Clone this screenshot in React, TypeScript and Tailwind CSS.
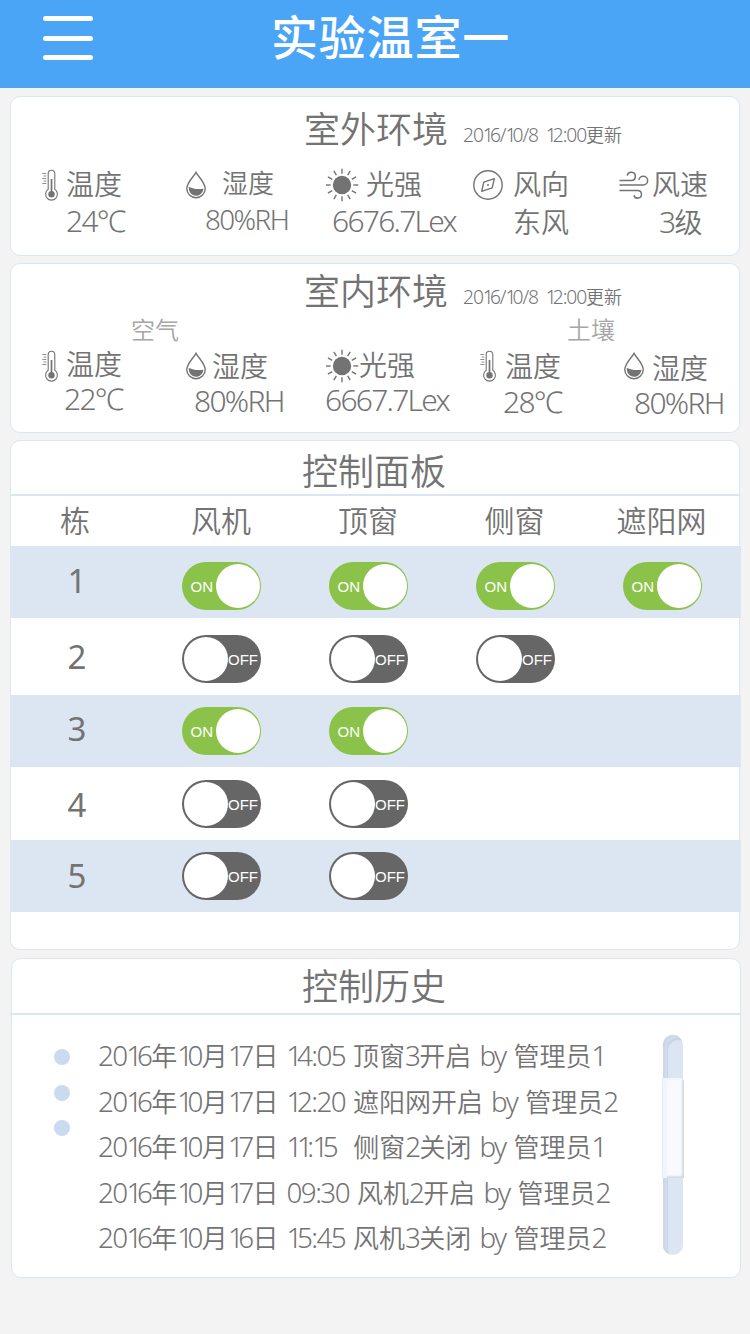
import { Fragment, type ReactNode } from 'react';

const INK = '#737373';

/* Latin runs sit slightly larger and tighter than the CJK glyphs around them. */
function Mixed({ text }: { text: string }) {
  const runs = text.match(/1+|[\x21-\x30\x32-\x7e℃]+|[^\x21-\x7e℃]+/g) ?? [];
  return (
    <>
      {runs.map((run, i) => {
        if (/^1/.test(run)) {
          return (
            <span key={i} className="text-[1.07em] leading-[0] tracking-[-0.2em]">
              {run}
            </span>
          );
        }
        if (/^[\x21-\x7e℃]/.test(run)) {
          return (
            <span key={i} className="text-[1.07em] leading-[0] tracking-[-0.057em]">
              {run}
            </span>
          );
        }
        return <Fragment key={i}>{run}</Fragment>;
      })}
    </>
  );
}

function Thermometer() {
  return (
    <svg width="18" height="34" viewBox="0 0 18 34" fill="none" stroke={INK}>
      <path d="M6.200 21.300V5.600a3.300 3.300 0 0 1 6.600 0v15.700a5.900 5.900 0 1 1-6.600 0Z" strokeWidth="1.100" />
      <path d="M9.500 11v14" strokeWidth="1.700" />
      <circle cx="9.500" cy="26.300" r="3.200" fill={INK} stroke="none" />
      <path d="M.3 5.500h4M1.500 8h2.800M.3 10.500h4M1.500 13h2.800M.3 15.500h4" strokeWidth=".8" />
    </svg>
  );
}

function Drop() {
  return (
    <svg width="20" height="34" viewBox="0 0 20 34" fill="none">
      <path
        d="M10 4.300C7.500 9 .8 14.500.8 20.600a9.200 9.200 0 0 0 18.400 0C19.200 14.500 12.500 9 10 4.300Z"
        stroke={INK}
        strokeWidth="1.400"
      />
      <path d="M2.700 19c2.800.4 4 1.600 7 2 2.700.4 5-.3 7.700-.3-.4 4.300-3.500 7-7.400 7-4.300 0-7.400-3.800-7.300-8.700Z" fill={INK} />
    </svg>
  );
}

function Sun() {
  const rays = Array.from({ length: 12 }, (_, i) => i * 30);
  return (
    <svg width="34" height="34" viewBox="0 0 34 34">
      <circle cx="16" cy="17" r="9.200" fill={INK} />
      {rays.map((a) => (
        <path key={a} d="M16 5.700V.7" stroke={INK} strokeWidth="1.400" transform={`rotate(${a} 16 17)`} />
      ))}
    </svg>
  );
}

function Compass() {
  return (
    <svg width="30" height="34" viewBox="0 0 30 34" fill="none" stroke={INK} strokeWidth="1.400">
      <circle cx="15" cy="17" r="14.200" />
      <path d="M21.300 10.700 19.200 19.800 8.700 23.300 10.800 14.200Z" strokeLinejoin="round" />
      <circle cx="15" cy="17" r="1" fill={INK} stroke="none" />
    </svg>
  );
}

function Wind() {
  return (
    <svg width="30" height="34" viewBox="0 0 30 34" fill="none" stroke={INK} strokeWidth="1.500">
      <path d="M.5 12.500H12.300a4.100 4.100 0 1 0-4.100-4.900" />
      <path d="M.5 17H24.300a4.400 4.400 0 1 0-4.400-5.100" />
      <path d="M.5 22.500H18.700a3.800 3.800 0 1 1-3.700 4.700" />
    </svg>
  );
}

type Metric = {
  icon: ReactNode;
  label: string;
  value: string;
  box: string;
  labelClass: string;
  valueClass: string;
};

const outdoor: Metric[] = [
  { icon: <Thermometer />, label: '温度', value: '24℃', box: 'w-[144px]', labelClass: 'ml-[6px] mt-[-1px]', valueClass: 'ml-[24px] mt-[2px]' },
  { icon: <Drop />, label: '湿度', value: '80%RH', box: 'w-[140px]', labelClass: 'ml-[16px] mt-[-2px] text-[26px]', valueClass: 'ml-[19px] mt-[1px] text-[26px]' },
  { icon: <Sun />, label: '光强', value: '6676.7Lex', box: 'w-[147px]', labelClass: 'ml-[6px] mt-[-1px]', valueClass: 'ml-[6px] mt-[2px]' },
  { icon: <Compass />, label: '风向', value: '东风', box: 'w-[146px]', labelClass: 'ml-[10px] mt-[-1px]', valueClass: 'ml-[40px] mt-[3px]' },
  { icon: <Wind />, label: '风速', value: '3级', box: 'w-[110px]', labelClass: 'ml-[3px] mt-[-1px]', valueClass: 'ml-[40px] mt-[3px]' },
];

const indoor: Metric[] = [
  { icon: <Thermometer />, label: '温度', value: '22℃', box: 'w-[144px]', labelClass: 'ml-[6px] mt-[-2px]', valueClass: 'ml-[22px] mt-[-1px]' },
  { icon: <Drop />, label: '湿度', value: '80%RH', box: 'w-[140px]', labelClass: 'ml-[6px]', valueClass: 'ml-[8px] mt-[1px]' },
  { icon: <Sun />, label: '光强', value: '6667.7Lex', box: 'w-[154px]', labelClass: 'ml-[-1px] mt-[-1px]', valueClass: 'ml-[-1px]' },
  { icon: <Thermometer />, label: '温度', value: '28℃', box: 'w-[144px]', labelClass: 'ml-[7px]', valueClass: 'ml-[23px] mt-[2px]' },
  { icon: <Drop />, label: '湿度', value: '80%RH', box: 'w-[110px]', labelClass: 'ml-[8px] mt-[2px]', valueClass: 'ml-[10px] mt-[3px]' },
];

function Metrics({ items, className }: { items: Metric[]; className: string }) {
  return (
    <div className={`flex pl-[31px] text-[28px] leading-[34px] ${className}`}>
      {items.map((m, i) => (
        <div key={i} className={`shrink-0 ${m.box}`}>
          <div className="flex h-[34px]">
            <span className="shrink-0">{m.icon}</span>
            <span className={m.labelClass}>{m.label}</span>
          </div>
          <div className={m.valueClass}>
            <Mixed text={m.value} />
          </div>
        </div>
      ))}
    </div>
  );
}

function PanelTitle({ title, className }: { title: string; className: string }) {
  return (
    <div className={`flex h-10 pl-[293px] ${className}`}>
      <h2 className="text-[36px] leading-[40px]">{title}</h2>
      <span className="ml-[15px] mt-[5px] text-[18px] leading-[40px] [word-spacing:3px]">
        <Mixed text="2016/10/8 12:00更新" />
      </span>
    </div>
  );
}

function Toggle({ on }: { on: boolean }) {
  return on ? (
    <div className="flex h-12 w-[79px] items-center justify-end rounded-[24px] bg-[#8bc34a] pr-[1px]">
      <span className="mr-[3px] font-['Liberation_Sans',sans-serif] text-[15px] font-normal leading-none text-white">ON</span>
      <span className="size-[44px] rounded-full bg-white" />
    </div>
  ) : (
    <div className="flex h-12 w-[79px] items-center rounded-[24px] bg-[#666666] pl-[2px]">
      <span className="size-[44px] rounded-full bg-white" />
      <span className="font-['Liberation_Sans',sans-serif] text-[15px] font-normal leading-none text-white">
        OFF
      </span>
    </div>
  );
}

const rows = [
  { id: 1, states: [true, true, true, true], row: 'h-[72px] bg-[#dce6f3]', num: 'mt-[11px]', sw: 'mt-[16px]' },
  { id: 2, states: [false, false, false], row: 'h-[77px]', num: 'mt-[15px]', sw: 'mt-[17px]' },
  { id: 3, states: [true, true], row: 'h-[72px] bg-[#dce6f3]', num: 'mt-[10px]', sw: 'mt-[12px]' },
  { id: 4, states: [false, false], row: 'h-[73px]', num: 'mt-[14px]', sw: 'mt-[13px]' },
  { id: 5, states: [false, false], row: 'h-[72px] bg-[#dce6f3]', num: 'mt-[12px]', sw: 'mt-[12px]' },
];

const history = [
  '2016年10月17日 14:05 顶窗3开启 by 管理员1',
  '2016年10月17日 12:20 遮阳网开启 by 管理员2',
  '2016年10月17日 11:15  侧窗2关闭 by 管理员1',
  '2016年10月17日 09:30 风机2开启 by 管理员2',
  '2016年10月16日 15:45 风机3关闭 by 管理员2',
];

export default function App() {
  return (
    <div className="h-[1334px] w-[750px] overflow-hidden bg-[#f3f3f3] font-['Noto_Sans','Noto_Sans_CJK_SC',sans-serif] font-[350] text-[#737373]">
      <header className="flex h-[88px] bg-[#4ba5f6] text-white">
        <div className="ml-[43px] mt-4 flex h-11 w-[50px] flex-col justify-between">
          <span className="h-[5px] rounded-full bg-white" />
          <span className="h-[5px] rounded-full bg-white" />
          <span className="h-[5px] rounded-full bg-white" />
        </div>
        <h1 className="ml-[178px] mt-[13px] text-[47px] font-medium leading-[48px] tracking-[0.8px]">实验温室一</h1>
      </header>

      <section className="ml-[10px] mt-2 h-[160px] w-[730px] rounded-[10px] border border-[#dbe6f3] bg-white">
        <PanelTitle title="室外环境" className="mt-[13px]" />
        <Metrics items={outdoor} className="mt-[18px]" />
      </section>

      <section className="ml-[10px] mt-[7px] h-[170px] w-[730px] rounded-[10px] border border-[#dbe6f3] bg-white">
        <PanelTitle title="室内环境" className="mt-[8px]" />
        <div className="mt-[6px] flex h-6 pl-[120px] text-[24px] leading-[24px] text-[#a6a6a6]">
          <span className="w-[436px]">空气</span>
          <span>土壤</span>
        </div>
        <Metrics items={indoor} className="mt-[7px]" />
      </section>

      <section className="ml-[10px] mt-[7px] h-[510px] w-[730px] rounded-[10px] border border-[#dbe6f3] bg-white">
        <h2 className="h-[55px] border-b-2 border-[#dbe6f3] pl-[291px] pt-[7px] text-[36px] leading-[47px]">控制面板</h2>
        <div className="ml-[-1px] grid h-[50px] grid-cols-[137px_148px_146px_147px_147px] text-center text-[30px] leading-[50px]">
          <span className="pr-[7px]">栋</span>
          <span>风机</span>
          <span>顶窗</span>
          <span>侧窗</span>
          <span>遮阳网</span>
        </div>
        {rows.map((r) => (
          <div key={r.id} className={`mr-[-2px] grid grid-cols-[137px_147px_147px_147px_147px] items-start justify-items-center ${r.row}`}>
            <span className={`mr-[5px] text-[33px] font-normal leading-[48px] ${r.num}`}>{r.id}</span>
            {r.states.map((on, i) => (
              <div key={i} className={r.sw}>
                <Toggle on={on} />
              </div>
            ))}
          </div>
        ))}
      </section>

      <section className="ml-[11px] mt-2 h-[320px] w-[730px] rounded-[10px] border border-[#dbe6f3] bg-white">
        <h2 className="ml-[-2px] h-[56px] border-b-2 border-[#dbe6f3] pl-[292px] pt-[1px] text-[36px] leading-[54px]">控制历史</h2>
        <div className="flex">
          <div className="ml-[42px] mt-[34px] flex flex-col gap-[19.5px]">
            <span className="size-4 rounded-full bg-[#c9daf1]" />
            <span className="size-4 rounded-full bg-[#c9daf1]" />
            <span className="size-4 rounded-full bg-[#c9daf1]" />
          </div>
          <div className="ml-[28px] mt-[19px] w-[565px] text-[26px] leading-[45.5px] [word-spacing:1.3px]">
            {history.map((line) => (
              <p key={line} className="whitespace-pre">
                <Mixed text={line} />
              </p>
            ))}
          </div>
          <div className="mt-5 flex h-[220px] w-[20px] flex-col items-center rounded-[10px] bg-[#dce6f3] pt-[43px] shadow-[inset_2px_1px_0_#cbd7e6,inset_4px_3px_0_#d2ddeb,inset_5px_5px_1px_#c6d3e3]">
            <div className="h-[100px] w-[22px] shrink-0 bg-[#f8fafd] shadow-[inset_1px_0_0_#e3eaf4,inset_5px_2px_2px_#f1f5fa,inset_-2px_-2px_2px_#d5dbe2]" />
          </div>
        </div>
      </section>
    </div>
  );
}
